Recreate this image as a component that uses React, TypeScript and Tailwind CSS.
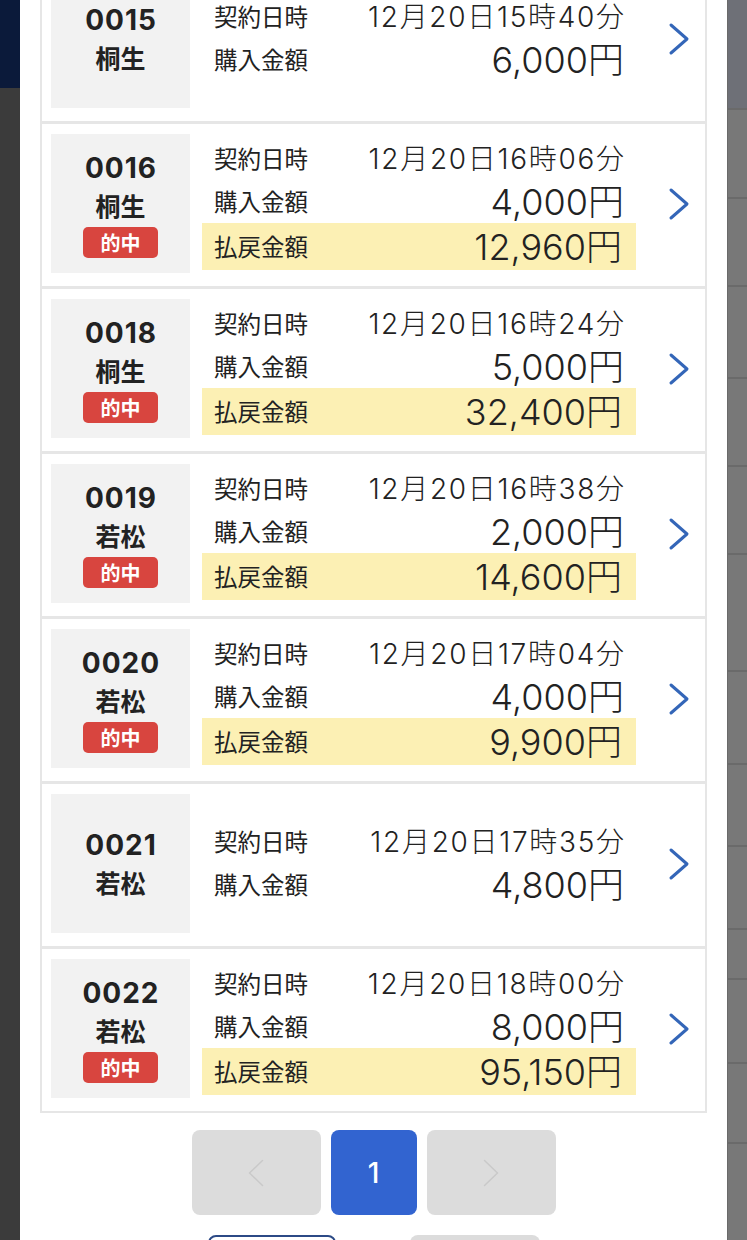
import React from "react";

type Row = {
  no: string;
  place: string;
  hit: boolean;
  date: string;
  buy: string;
  pay?: string;
};

const rows: Row[] = [
  { no: "0015", place: "桐生", hit: false, date: "12月20日15時40分", buy: "6,000円" },
  { no: "0016", place: "桐生", hit: true, date: "12月20日16時06分", buy: "4,000円", pay: "12,960円" },
  { no: "0018", place: "桐生", hit: true, date: "12月20日16時24分", buy: "5,000円", pay: "32,400円" },
  { no: "0019", place: "若松", hit: true, date: "12月20日16時38分", buy: "2,000円", pay: "14,600円" },
  { no: "0020", place: "若松", hit: true, date: "12月20日17時04分", buy: "4,000円", pay: "9,900円" },
  { no: "0021", place: "若松", hit: false, date: "12月20日17時35分", buy: "4,800円" },
  { no: "0022", place: "若松", hit: true, date: "12月20日18時00分", buy: "8,000円", pay: "95,150円" },
];

const font = { fontFamily: '"Inter", "Noto Sans CJK JP", "Noto Sans", sans-serif' };
const cjk = { fontFamily: '"Noto Sans CJK JP", "Noto Sans", sans-serif' };

function Chevron({ color, w = 20, h = 32, sw = 3 }: { color: string; w?: number; h?: number; sw?: number }) {
  return (
    <svg width={w} height={h} viewBox={`0 0 ${w} ${h}`} fill="none">
      <path d={`M${sw} ${sw} L${w - sw} ${h / 2} L${sw} ${h - sw}`} stroke={color} strokeWidth={sw} strokeLinecap="round" strokeLinejoin="round" />
    </svg>
  );
}

function ChevronLeft({ color, w = 20, h = 32, sw = 2 }: { color: string; w?: number; h?: number; sw?: number }) {
  return (
    <svg width={w} height={h} viewBox={`0 0 ${w} ${h}`} fill="none">
      <path d={`M${w - sw} ${sw} L${sw} ${h / 2} L${w - sw} ${h - sw}`} stroke={color} strokeWidth={sw} strokeLinecap="round" strokeLinejoin="round" />
    </svg>
  );
}

function ListRow({ r }: { r: Row }) {
  return (
    <div className="flex items-stretch border-b-[3px] border-[#e6e6e6] pl-[9px] pt-[10px] pb-[13px] last:border-b-0">
      <div className="flex h-[139px] w-[139px] shrink-0 flex-col items-center justify-center bg-[#f2f2f2] text-[#222]">
        <div className="mr-[-1px] text-[28px] font-bold leading-[38px] tracking-[1px]">{r.no}</div>
        <div className="text-[25px] font-bold leading-[37px]" style={cjk}>{r.place}</div>
        {r.hit && (
          <div className="mt-[3px] flex h-[31px] w-[75px] items-center justify-center rounded-[5px] bg-[#d8453f] text-[20px] font-bold leading-none text-white" style={cjk}>
            的中
          </div>
        )}
      </div>
      <div className="ml-[12px] flex w-[434px] flex-col justify-center text-[#222]">
        <div className="flex h-[43px] items-center justify-between px-[12px]">
          <span className="text-[23.5px]" style={cjk}>契約日時</span>
          <span className="mr-[-1.7px] text-[28px] font-light tracking-[1.7px]">{r.date}</span>
        </div>
        <div className="flex h-[43px] items-center justify-between px-[12px]">
          <span className="text-[23.5px]" style={cjk}>購入金額</span>
          <span className="text-[36px] font-light leading-none">{r.buy}</span>
        </div>
        {r.pay && (
          <div className="flex h-[47px] items-center justify-between bg-[#fcf0b4] pl-[12px] pr-[14px]">
            <span className="text-[23.5px]" style={cjk}>払戻金額</span>
            <span className="text-[36px] font-light leading-none">{r.pay}</span>
          </div>
        )}
      </div>
      <div className="flex flex-1 items-center justify-center pl-[16px]">
        <Chevron color="#3466b8" w={22} h={34} />
      </div>
    </div>
  );
}

export default function App() {
  const rightBlocks = [108, 89, 88, 92, 88, 88, 117, 93, 82, 83, 50, 84, 80, 90];
  return (
    <div className="grid h-[1240px] w-[747px] grid-cols-[20px_707px_20px] overflow-hidden" style={font}>
      <div className="flex flex-col">
        <div className="h-[88px] bg-[#0b1a3a]" />
        <div className="flex-1 bg-[#3b3b3b]" />
      </div>
      <div className="flex flex-col overflow-hidden bg-white">
        <div className="mx-[20px] -mt-[43px] border-2 border-[#e6e6e6]">
          {rows.map((r) => (
            <ListRow key={r.no} r={r} />
          ))}
        </div>
        <div className="mt-[17px] flex justify-center gap-[10px]">
          <div className="flex h-[85px] w-[129px] items-center justify-center rounded-[8px] bg-[#dcdcdc]">
            <ChevronLeft color="#c9c9c9" w={16} h={28} sw={1.5} />
          </div>
          <div className="flex h-[85px] w-[86px] items-center justify-center rounded-[8px] bg-[#3264d0] text-[28px] font-medium text-white">
            1
          </div>
          <div className="flex h-[85px] w-[129px] items-center justify-center rounded-[8px] bg-[#dcdcdc]">
            <Chevron color="#c9c9c9" w={16} h={28} sw={1.5} />
          </div>
        </div>
        <div className="mt-[20px] flex justify-center gap-[74px]">
          <div className="h-[40px] w-[128px] rounded-[8px] border-2 border-[#2c4a86] bg-white" />
          <div className="h-[40px] w-[130px] rounded-[8px] bg-[#dcdcdc]" />
        </div>
      </div>
      <div className="flex flex-col border-l border-[#6a6a6a]">
        {rightBlocks.map((h, i) => (
          <div
            key={i}
            className={i === 0 ? "shrink-0 bg-[#6e7077]" : "shrink-0 border-t-2 border-[#6a6a6a] bg-[#787878]"}
            style={{ height: h }}
          />
        ))}
        <div className="flex-1 bg-[#787878]" />
      </div>
    </div>
  );
}
